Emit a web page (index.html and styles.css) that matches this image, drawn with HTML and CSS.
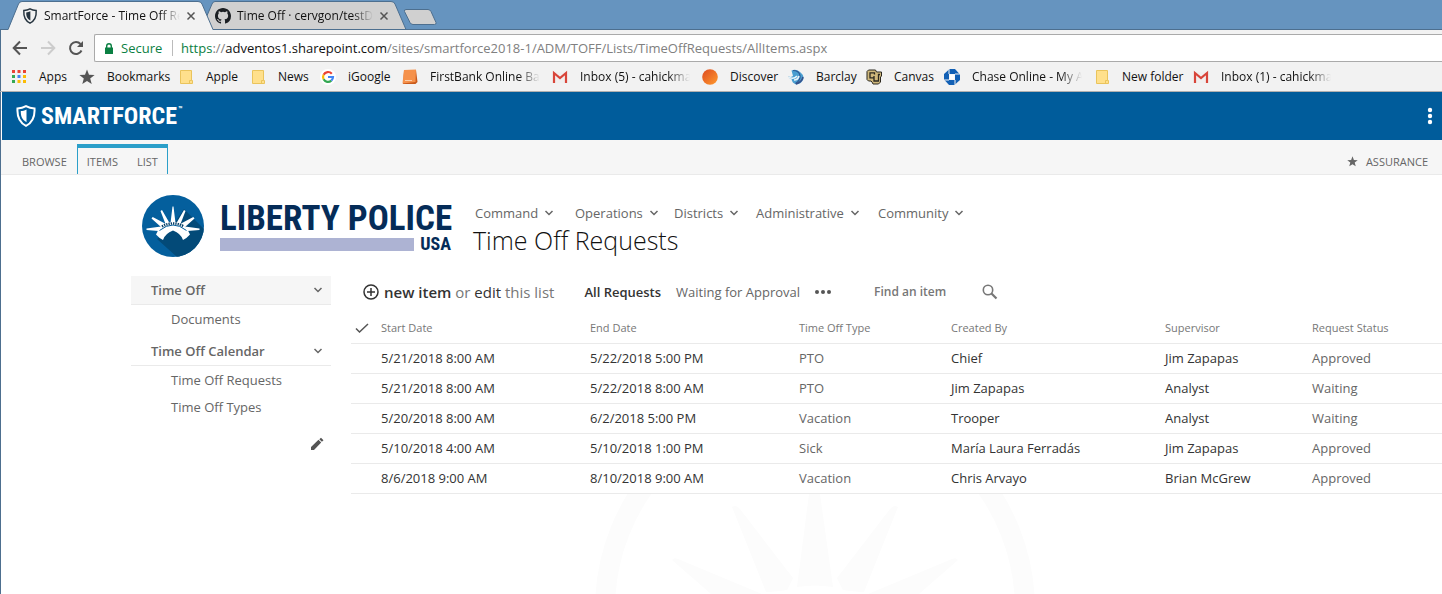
FILE: index.html
```html
<!DOCTYPE html>
<html lang="en">
<head>
<meta charset="utf-8">
<title>SmartForce - Time Off Requests</title>
<link rel="stylesheet" href="styles.css">
</head>
<body>
<svg class="defs" aria-hidden="true">
  <defs>
    <symbol id="folder" viewBox="0 0 16 16"><path d="M2.500 1.500h11v10h1v3h-12z" fill="#ffe08c" stroke="#eac45c"/><path d="M11.500 14v-2.500h2" fill="none" stroke="#eac45c"/></symbol>
    <symbol id="gmail" viewBox="0 0 16 16"><path d="M1 3h14v11H1z" fill="#f1efef"/><path d="M2 14V4l6 5 6-5v10" fill="none" stroke="#d8453a" stroke-width="2.200"/></symbol>
    <symbol id="down" viewBox="0 0 10 6"><path d="M1.500 1 5 4.500 8.500 1" fill="none" stroke="currentColor" stroke-width="1.500"/></symbol>
    <symbol id="close" viewBox="0 0 10 10"><path d="m1.500 1.500 7 7m0-7-7 7" fill="none" stroke="#555" stroke-width="1.500"/></symbol>
    <symbol id="star" viewBox="0 0 16 16"><path d="m8 .5 2 5.300 5.600.2-4.400 3.500 1.500 5.500L8 11.900 3.300 15l1.500-5.500L.4 6 6 5.800z" fill="currentColor"/></symbol>
    <symbol id="shield" viewBox="0 0 20 22"><path d="M10 1.200C7 3 4.500 3.400 1.500 3.400 1 11 2.500 17 10 20.800 17.500 17 19 11 18.500 3.400 15.500 3.400 13 3 10 1.200z" fill="none" stroke="currentColor" stroke-width="2"/><path d="M10.500 4.500C8.600 5.600 6.600 6 4.800 6.100 4.700 11 5.800 14.500 10.500 17.200z" fill="currentColor"/></symbol>
  </defs>
</svg>

<header class="browser">
  <div class="tabs">
    <div class="tab tab-active">
      <svg class="tab-shape" viewBox="0 0 206 30"><path d="M0 30 10.500 4Q11.500 1.500 14 1.500H190Q193 1.500 194 4L205 30H0z" fill="#f2f2f2"/><path d="M0 29.500 10.500 4Q11.500 1.500 14 1.500H190Q193 1.500 194 4L205 29.500" fill="none" stroke="#4d6f8f"/></svg>
      <svg class="i16 ink"><use href="#shield"/></svg>
      <span class="tab-title">SmartForce - Time Off Requests</span>
      <button class="close" aria-label="Close tab"><svg><use href="#close"/></svg></button>
    </div>
    <div class="tab">
      <svg class="tab-shape" viewBox="0 0 206 30"><path d="M5 18 11 4Q12 1.500 14 1.500H190Q193 1.500 194 4L205 29.500H9.500z" fill="#d0d0d0" stroke="#4d6f8f"/></svg>
      <svg class="i16" viewBox="0 0 16 16"><path fill="#1b1f23" d="M8 0C3.580 0 0 3.580 0 8c0 3.540 2.290 6.530 5.470 7.590.4.070.55-.17.55-.38v-1.490c-2.010.37-2.530-.49-2.690-.94-.09-.23-.48-.94-.82-1.130-.28-.15-.68-.52-.01-.53.63-.01 1.080.58 1.230.82.72 1.210 1.870.87 2.330.66.070-.52.28-.87.51-1.070-1.780-.2-3.640-.89-3.640-3.950 0-.87.31-1.590.82-2.150-.08-.2-.36-1.020.08-2.120 0 0 .67-.21 2.200.82a7.600 7.600 0 0 1 4 0c1.530-1.040 2.200-.82 2.200-.82.44 1.100.16 1.920.08 2.120.51.56.82 1.270.82 2.150 0 3.070-1.870 3.750-3.650 3.950.29.25.54.73.54 1.480v2.200c0 .21.15.46.55.38A8 8 0 0 0 16 8c0-4.420-3.580-8-8-8z"/></svg>
      <span class="tab-title">Time Off · cervgon/testDocs</span>
      <button class="close" aria-label="Close tab"><svg><use href="#close"/></svg></button>
    </div>
    <button class="new-tab" aria-label="New tab"><svg viewBox="0 0 34 18"><path d="M3 1.500h22q2 0 3 2l5 11q.5 2-1.500 2H10q-2 0-3-2L1.500 3.500Q1 1.500 3 1.500z" fill="#d0d0d0" stroke="#4d6f8f"/></svg></button>
  </div>
  <div class="toolbar">
    <button aria-label="Back"><svg class="i16" viewBox="0 0 16 16"><path d="M15 8H2M8 1.500 1.700 8 8 14.500" fill="none" stroke="#555" stroke-width="2"/></svg></button>
    <button aria-label="Forward"><svg class="i16" viewBox="0 0 16 16"><path d="M1 8h13M8 1.500 14.300 8 8 14.500" fill="none" stroke="#ccc" stroke-width="2"/></svg></button>
    <button aria-label="Reload"><svg class="i16" viewBox="0 0 16 16"><path d="M13.500 10.500A6 6 0 1 1 12.500 4" fill="none" stroke="#555" stroke-width="2"/><path d="M15 1v6H9z" fill="#555"/></svg></button>
    <div class="address">
      <svg class="lock" viewBox="0 0 10 13"><path d="M1 5.500h8V12H1z" fill="#0b8043"/><path d="M2.700 6V4a2.300 2.300 0 0 1 4.600 0v2" fill="none" stroke="#0b8043" stroke-width="1.400"/></svg>
      <span class="secure">Secure</span>
      <span class="url"><span class="scheme">https</span>://<b>adventos1.sharepoint.com</b>/sites/smartforce2018-1/ADM/TOFF/Lists/TimeOffRequests/AllItems.aspx</span>
    </div>
  </div>
  <nav class="bookmarks" aria-label="Bookmarks">
    <a href="#"><svg class="i16" viewBox="0 0 16 16"><path d="M1 1h3v3H1zM6.500 1h3v3h-3zM12 1h3v3h-3z" fill="#ea4335"/><path d="M1 6h3v3H1zM1 11h3v3H1z" fill="#34a853"/><path d="M6.500 6h3v3h-3z" fill="#4285f4"/><path d="M12 6h3v3h-3zM6.500 11h3v3h-3zM12 11h3v3h-3z" fill="#fbbc05"/></svg><span>Apps</span></a>
    <a href="#"><svg class="i16 gray"><use href="#star"/></svg><span>Bookmarks</span></a>
    <a href="#"><svg class="i16"><use href="#folder"/></svg><span>Apple</span></a>
    <a href="#"><svg class="i16"><use href="#folder"/></svg><span>News</span></a>
    <a href="#"><svg class="i16" viewBox="0 0 16 16"><circle cx="8" cy="8" r="8" fill="#fff"/><g fill="none" stroke-width="2.200"><path d="M11.800 4.700A5 5 0 0 0 3.600 5.700" stroke="#ea4335"/><path d="M3.600 5.700a5 5 0 0 0 0 4.600" stroke="#fbbc05"/><path d="M3.600 10.300a5 5 0 0 0 7.700 1.400" stroke="#34a853"/><path d="M11.300 11.700A5 5 0 0 0 13 8H8" stroke="#4285f4"/></g></svg><span>iGoogle</span></a>
    <a href="#"><svg class="i16" viewBox="0 0 16 16"><path d="M2 2 14 1l1.500 12-2 2H1z" fill="#c95a1c"/><path d="M2 1 14 .5 13.500 13 .500 14.500z" fill="#f5914b"/><path d="M3 11.500h7" stroke="#fbd0ae"/></svg><span class="fade">FirstBank Online Banking</span></a>
    <a href="#"><svg class="i16"><use href="#gmail"/></svg><span class="fade">Inbox (5) - cahickman</span></a>
    <a href="#"><svg class="i16" viewBox="0 0 16 16"><defs><linearGradient id="dg" x2="1" y2="1"><stop stop-color="#dd4a20"/><stop offset="1" stop-color="#ff9b2e"/></linearGradient></defs><circle cx="8" cy="8" r="7.800" fill="url(#dg)"/></svg><span>Discover</span></a>
    <a href="#"><svg class="i16" viewBox="0 0 16 16"><path d="M.5 7Q2 9 5 7L3.500 1.500Q8-.5 12 3q4 3 3.500 7-2 5-7.500 5.500Q4 14 3.500 10 1 10 .5 7z" fill="#4a9ed0"/><path d="M5 1.500q6 0 7 5 .5 5-4.500 8" fill="none" stroke="#2e5a96" stroke-width="1.200"/><path d="M1 8.500q5 2 8-1.500M6 11q4 0 5-4" fill="none" stroke="#eaf5fb" stroke-width="1.600"/><path d="M15 8q-1 5-7 7" fill="none" stroke="#37508a" stroke-width="1.500"/></svg><span>Barclay</span></a>
    <a href="#"><svg class="i16" viewBox="0 0 16 16"><path d="M2.500 1h7l1 2h5v4l-1 1v5l-2 2H7l-1-2-1-1H2.500L1 10.500v-8z" fill="#cfb87c" stroke="#2b2820"/><path d="M8.500 5.500V3.800H4v5h4V7M8 7v5h4.500V5.500h1.500" fill="none" stroke="#2b2820" stroke-width="1.300"/></svg><span>Canvas</span></a>
    <a href="#"><svg class="i16" viewBox="0 0 16 16"><g fill="#1260b5"><path d="M5 0h6l4.500 5H5z"/><path d="M16 5v6l-5 4.500V5z"/><path d="M11 16H5L.5 11H11z"/><path d="M0 11V5L5 .5V11z"/></g><path d="M5.500 5.500h5v5h-5z" fill="#fff"/><path d="M5 0v5M16 5h-5M11 16v-5M0 11h5" stroke="#f2f2f2"/></svg><span class="fade">Chase Online - My Account</span></a>
    <a href="#"><svg class="i16"><use href="#folder"/></svg><span>New folder</span></a>
    <a href="#"><svg class="i16"><use href="#gmail"/></svg><span class="fade">Inbox (1) - cahickman</span></a>
  </nav>
</header>

<div class="page">
  <header class="brandbar">
    <a class="brand" href="#"><svg class="brand-shield"><use href="#shield"/></svg><span>SMARTFORCE</span><sup>™</sup></a>
    <button class="menu" aria-label="Menu"><svg viewBox="0 0 6 18" fill="#fff"><circle cx="3" cy="3" r="2.200"/><circle cx="3" cy="9" r="2.200"/><circle cx="3" cy="15" r="2.200"/></svg></button>
  </header>
  <div class="ribbon">
    <button>BROWSE</button>
    <div class="ribbon-group"><button>ITEMS</button><button>LIST</button></div>
    <button class="assurance"><svg><use href="#star"/></svg>ASSURANCE</button>
  </div>

  <div class="site-head">
    <a class="site-logo" href="#" aria-label="Liberty Police USA">
      <svg class="seal" viewBox="0 0 62 62"><defs><clipPath id="round"><circle cx="31" cy="31" r="31"/></clipPath></defs><circle cx="31" cy="31" r="31" fill="#045f9d"/><path clip-path="url(#round)" d="M42 14 62 34v28H35L15 44 31 30z" fill="#034a78"/><g fill="#fff"><path d="M28.500 28 30.500 11.500h1L33.500 28zM23.500 29 18.500 16l1.500-1 7.500 13zM38.500 29l5-13-1.500-1-7.500 13zM19 32 9.500 23.500l1.200-1.500L23 28.500zM43 32l9.500-8.500-1.200-1.500L39 28.500zM16.500 36 4.500 35v-1.500L19 31.500zM45.500 36l12-1v-1.500L43 31.500z"/><path d="M17 33.500Q23 27 31 27t14 6.500L48 39.500q-3 3.500-7 5.500-2-6.500-10-9.500-8 3-10 9.500Q17 43 14 39.500z"/></g><path d="M17.500 35.500Q31 24.500 44.500 35.500" fill="none" stroke="#045f9d"/><path d="M20 31.500Q31 25.500 42 31.500" fill="none" stroke="#023b63" stroke-width="2.500" stroke-dasharray="1.300 1"/></svg>
      <span class="wordmark"><span class="name">LIBERTY POLICE</span><span class="under"><span class="bar"></span><span class="usa">USA</span></span></span>
    </a>
    <div class="heading">
      <nav class="topnav" aria-label="Site">
        <a href="#">Command<svg><use href="#down"/></svg></a>
        <a href="#">Operations<svg><use href="#down"/></svg></a>
        <a href="#">Districts<svg><use href="#down"/></svg></a>
        <a href="#">Administrative<svg><use href="#down"/></svg></a>
        <a href="#">Community<svg><use href="#down"/></svg></a>
      </nav>
      <h1>Time Off Requests</h1>
    </div>
  </div>

  <div class="columns">
    <nav class="sidebar" aria-label="Lists">
      <a class="group current" href="#">Time Off<svg><use href="#down"/></svg></a>
      <a class="sub" href="#">Documents</a>
      <a class="group" href="#">Time Off Calendar<svg><use href="#down"/></svg></a>
      <a class="sub" href="#">Time Off Requests</a>
      <a class="sub" href="#">Time Off Types</a>
      <button class="edit" aria-label="Edit links"><svg viewBox="0 0 14 14" fill="#555"><path d="M1 10 8.500 2.800 11.200 5.500 4 13H1zM9.300 2.200 11 .7l2.500 2.500-1.600 1.600z"/></svg></button>
    </nav>
    <main>
      <div class="listbar">
        <p class="actions"><svg viewBox="0 0 16 16" fill="none" stroke="#333" stroke-width="1.500"><circle cx="8" cy="8" r="7"/><path d="M8 4v8M4 8h8"/></svg><span><a class="strong" href="#">new item</a> or <a href="#">edit</a> this list</span></p>
        <a class="view selected" href="#">All Requests</a>
        <a class="view" href="#">Waiting for Approval</a>
        <button class="more" aria-label="More views"><svg viewBox="0 0 16 4" fill="#555"><circle cx="2" cy="2" r="2"/><circle cx="8" cy="2" r="2"/><circle cx="14" cy="2" r="2"/></svg></button>
        <input class="find" type="text" placeholder="Find an item" aria-label="Find an item">
        <button class="search" aria-label="Search"><svg viewBox="0 0 16 16" fill="none" stroke="#777"><circle cx="6" cy="6" r="4.700" stroke-width="1.600"/><path d="m9.500 9.500 5 5" stroke-width="2.200"/></svg></button>
      </div>
      <table>
        <colgroup><col class="c-check"><col class="c-date"><col class="c-date"><col class="c-type"><col class="c-by"><col class="c-sup"><col></colgroup>
        <thead><tr><th><svg viewBox="0 0 14 10"><path d="m1 5.500 3.500 3.500L13 1" fill="none" stroke="#555" stroke-width="1.500"/></svg></th><th>Start Date</th><th>End Date</th><th>Time Off Type</th><th>Created By</th><th>Supervisor</th><th>Request Status</th></tr></thead>
        <tbody>
          <tr><td></td><td>5/21/2018 8:00 AM</td><td>5/22/2018 5:00 PM</td><td class="soft">PTO</td><td>Chief</td><td>Jim Zapapas</td><td class="soft">Approved</td></tr>
          <tr><td></td><td>5/21/2018 8:00 AM</td><td>5/22/2018 8:00 AM</td><td class="soft">PTO</td><td>Jim Zapapas</td><td>Analyst</td><td class="soft">Waiting</td></tr>
          <tr><td></td><td>5/20/2018 8:00 AM</td><td>6/2/2018 5:00 PM</td><td class="soft">Vacation</td><td>Trooper</td><td>Analyst</td><td class="soft">Waiting</td></tr>
          <tr><td></td><td>5/10/2018 4:00 AM</td><td>5/10/2018 1:00 PM</td><td class="soft">Sick</td><td>María Laura Ferradás</td><td>Jim Zapapas</td><td class="soft">Approved</td></tr>
          <tr><td></td><td>8/6/2018 9:00 AM</td><td>8/10/2018 9:00 AM</td><td class="soft">Vacation</td><td>Chris Arvayo</td><td>Brian McGrew</td><td class="soft">Approved</td></tr>
        </tbody>
      </table>
      <div class="watermark" aria-hidden="true"><svg viewBox="594 494 442 100"><circle cx="815" cy="609" r="210" fill="none" stroke="#fcfcfc" stroke-width="20"/><path fill="#fcfcfc" d="M809 494h11l13 93q-18-3-36 0zM732 507q4-3 8 2l53 69-6 12q-15 2-21 2zM898 507q-4-3-8 2l-53 69 6 12q15 2 21 2zM672 560q2-3 6-1l84 35h-51zM958 560q-2-3-6-1l-84 35h51z"/></svg></div>
    </main>
  </div>
</div>
</body>
</html>
```
FILE: styles.css
```css
* { box-sizing: border-box; }
body {
  margin: 0;
  min-height: 100vh;
  display: flex;
  flex-direction: column;
  background: #fff;
  color: #333;
  font: 13px/20px "Segoe UI", "Open Sans", "Noto Sans", sans-serif;
}
a { color: inherit; text-decoration: none; }
button { border: 0; padding: 0; background: none; color: inherit; font: inherit; display: flex; align-items: center; }
svg { display: block; flex: none; }
.defs { position: absolute; width: 0; height: 0; }
.i16 { width: 16px; height: 16px; }
.ink { color: #26343f; }
.gray { color: #555; }

/* Browser frame */
.browser { background: #f2f2f2; border-bottom: 1px solid #b0b0b0; font-size: 12px; color: #111; }
.tabs { display: flex; height: 30px; padding-left: 8px; background: #6694bf; border-bottom: 1px solid #4d6f8f; }
.tab { position: relative; isolation: isolate; display: flex; align-items: center; width: 206px; height: 30px; padding: 1px 15px 0 14px; gap: 6px; }
.tab + .tab { margin-left: -13px; }
.tab-active { z-index: 1; }
.tab-shape { position: absolute; inset: 0; width: 206px; height: 30px; z-index: -1; }
.tab-title { width: 136px; overflow: hidden; white-space: nowrap; mask-image: linear-gradient(to right, #000 85%, transparent); }
.close svg { width: 10px; height: 10px; }
.new-tab { margin: 8px 0 0 -4px; height: 18px; }
.new-tab svg { width: 34px; height: 18px; }
.toolbar { display: flex; align-items: center; gap: 12px; height: 32px; padding: 4px 0 0 11px; border-left: 1px solid #4d6f8f; }
.toolbar > button { height: 28px; }
.address { flex: 1; display: flex; align-items: center; height: 28px; padding-left: 9px; margin-left: -2px; border: 1px solid #aaa; border-right: 0; border-radius: 2px 0 0 2px; background: #fff; font-size: 13px; white-space: nowrap; overflow: hidden; }
.lock { width: 10px; height: 13px; margin-right: 7px; }
.secure { width: 43px; margin-right: 8px; color: #0b8043; line-height: 16px; }
.url { color: #808080; line-height: 16px; padding-left: 8px; border-left: 1px solid #bbb; }
.url b { color: #111; font-weight: 400; }
.scheme { color: #0b8043; }
.bookmarks { display: grid; grid-template-columns: 68px 99px 72px 70px 82px 150px 150px 86px 78px 78px 150px 99px 150px; height: 29px; padding-left: 10px; border-left: 1px solid #4d6f8f; overflow: hidden; }
.bookmarks a { display: flex; align-items: center; gap: 12px; white-space: nowrap; }
.fade { width: 110px; overflow: hidden; mask-image: linear-gradient(to right, #000 80%, transparent); }

/* Page */
.page { flex: 1; display: flex; flex-direction: column; border-left: 1px solid #4d6f8f; }
.brandbar { display: flex; justify-content: space-between; align-items: center; height: 48px; margin-left: 1px; padding: 0 9px 0 14px; background: #005c9b; color: #fff; }
.brand { display: flex; align-items: center; gap: 5px; font: bold 24px/24px "Roboto Condensed", "Liberation Sans Narrow", "Open Sans", sans-serif; }
.brand sup { align-self: flex-start; margin-left: -4px; font-size: 8px; line-height: 12px; }
.brand-shield { width: 20px; height: 22px; }
.menu svg { width: 6px; height: 18px; }
.ribbon { display: flex; align-items: center; height: 35px; padding: 0 14px 0 21px; background: #f6f6f6; border-bottom: 1px solid #eaeaea; color: #666; font-size: 11px; }
.ribbon > button { padding-top: 9px; }
.ribbon-group { display: flex; align-self: flex-end; gap: 19px; height: 30px; margin-left: 10px; padding: 2px 9px 0; border: 1px solid #2b9fc9; border-top-width: 4px; border-bottom: 0; }
.ribbon .assurance { margin-left: auto; gap: 8px; }
.assurance svg { width: 11px; height: 11px; }

.site-head { display: flex; gap: 22px; padding: 20px 0 0 141px; height: 101px; }
.site-logo { display: flex; gap: 16px; height: 62px; }
.seal { width: 62px; height: 62px; }
.wordmark { display: flex; flex-direction: column; width: 231px; padding-top: 6px; color: #052c58; font: bold 35px/36px "Roboto Condensed", "Liberation Sans Narrow", "Open Sans", sans-serif; white-space: nowrap; }
.under { display: flex; align-items: center; gap: 6px; }
.bar { flex: 1; height: 13px; background: #adb3d3; }
.usa { font-size: 18px; line-height: 14px; }
.heading { padding-top: 8px; }
.topnav { display: grid; grid-template-columns: 100px 99px 82px 122px auto; padding-left: 2px; color: #666; }
.topnav a { display: flex; align-items: center; gap: 6px; }
.topnav svg { width: 10px; height: 6px; }
h1 { margin: 1px 0 0; font-size: 25px; line-height: 32px; font-weight: 300; color: #111; }

.columns { flex: 1; display: grid; grid-template-columns: 200px minmax(0, 1fr); gap: 20px; padding-left: 130px; }
.sidebar { color: #666; }
.sidebar a { display: block; }
.sidebar .group { display: flex; align-items: center; justify-content: space-between; height: 29px; padding: 0 8px 0 20px; border-bottom: 1px solid #eaeaea; font-weight: 600; }
.group.current { background: #f6f6f6; }
.group svg { width: 10px; height: 6px; }
.sidebar .sub { height: 27px; padding: 4px 0 0 40px; }
.sub + .group { margin-top: 5px; }
.edit { margin: 17px 7px 0 auto; }
.edit svg { width: 14px; height: 14px; }

main { display: flex; flex-direction: column; min-width: 0; }
.listbar { display: flex; align-items: center; height: 38px; padding: 0 0 6px 12px; color: #666; }
.actions { display: flex; align-items: center; gap: 5px; margin: 0 30px 0 0; font-size: 15px; color: #777; white-space: nowrap; }
.actions svg { width: 16px; height: 16px; }
.actions a { color: #333; }
.actions .strong, .selected { font-weight: 600; color: #333; }
.view { margin-right: 15px; white-space: nowrap; }
.more svg { width: 16px; height: 4px; }
.find { width: 88px; margin: 0 20px 0 43px; padding: 0; border: 0; background: none; font: 600 12px/20px "Segoe UI", "Open Sans", "Noto Sans", sans-serif; color: #666; }
.find::placeholder { color: #777; opacity: 1; }
.search svg { width: 16px; height: 16px; }

table { width: 100%; table-layout: fixed; border-collapse: collapse; background: #fff; }
.c-check { width: 30px; }
.c-date { width: 209px; }
.c-type { width: 152px; }
.c-by { width: 214px; }
.c-sup { width: 147px; }
th, td { height: 30px; padding: 0; border-bottom: 1px solid #eaeaea; text-align: left; white-space: nowrap; }
th { height: 29px; font-size: 11px; font-weight: 400; color: #777; }
th svg { width: 14px; height: 10px; margin-left: 4px; }
.soft { color: #666; }
.watermark { flex: 1; position: relative; overflow: hidden; }
.watermark svg { position: absolute; top: 0; left: 243px; width: 442px; height: 100px; }
```
